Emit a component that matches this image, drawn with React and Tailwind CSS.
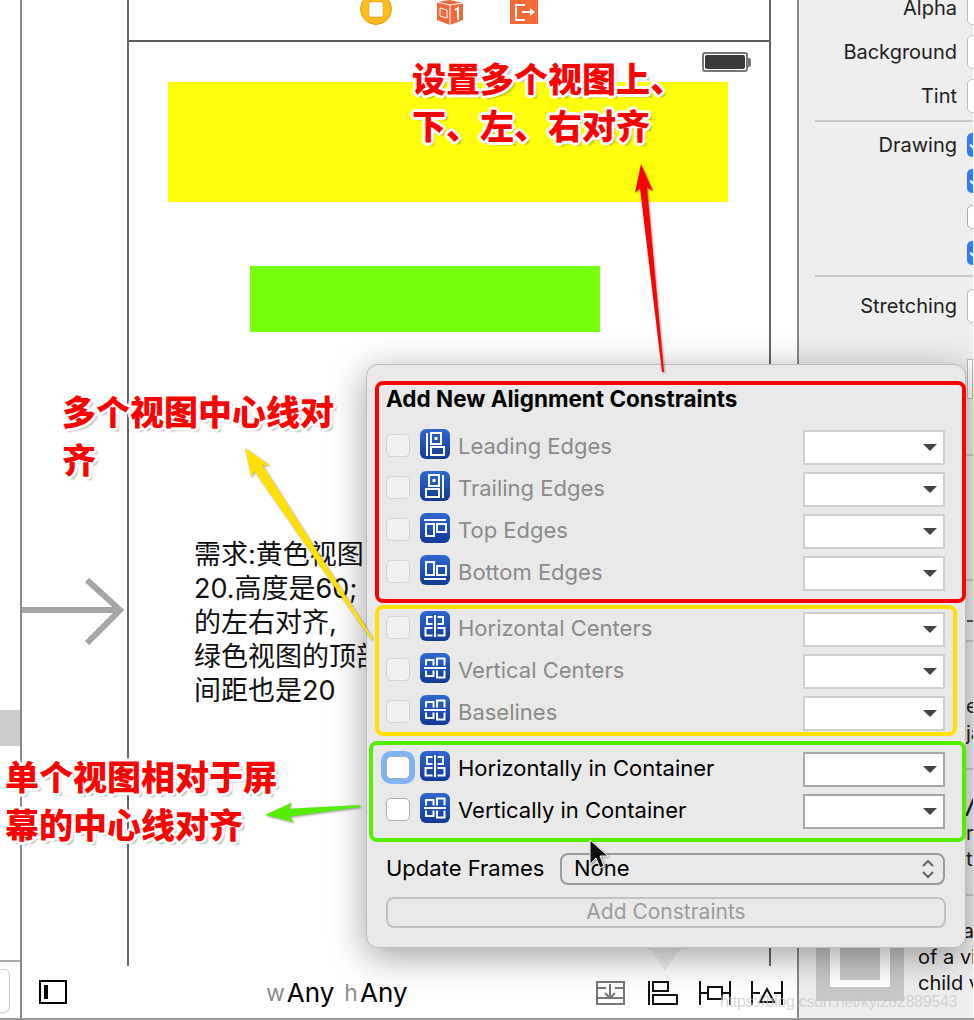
const uiFont = { fontFamily: '"Inter", "Liberation Sans", sans-serif' };

function AlignIcon({ kind }) {
  const common = { fill: "none", stroke: "white", strokeWidth: 2 };
  return (
    <div className="h-[30px] w-[30px] shrink-0 rounded-[6px] bg-linear-to-b from-[#2f68d0] to-[#143a94] -mt-[6px]">
      <svg width="30" height="30" viewBox="0 0 30 30" {...common}>
        {kind === "leading" && (
          <>
            <path d="M7 4v23" />
            <rect x="11" y="4" width="10" height="11" />
            <rect x="11" y="18" width="13" height="8" />
            <rect x="14.5" y="8" width="3" height="3" fill="white" stroke="none" />
          </>
        )}
        {kind === "trailing" && (
          <>
            <path d="M23 4v23" />
            <rect x="9" y="4" width="10" height="11" />
            <rect x="6" y="18" width="13" height="8" />
            <rect x="12.5" y="8" width="3" height="3" fill="white" stroke="none" />
          </>
        )}
        {kind === "top" && (
          <>
            <path d="M4 7h22" />
            <rect x="6" y="11" width="8" height="12" />
            <rect x="17" y="11" width="9" height="8" />
          </>
        )}
        {kind === "bottom" && (
          <>
            <path d="M4 24h22" />
            <rect x="6" y="7" width="8" height="13" />
            <rect x="17" y="11" width="9" height="9" />
          </>
        )}
        {kind === "hcenter" && (
          <>
            <rect x="7" y="6" width="16" height="7" />
            <rect x="5.5" y="17" width="19" height="7.5" />
            <path d="M15 3v24" stroke="#1f4fb0" strokeWidth="5" />
            <path d="M15 4v22" />
          </>
        )}
        {kind === "vcenter" && (
          <>
            <rect x="6" y="7" width="7.5" height="16" />
            <rect x="17" y="5.5" width="7.5" height="19" />
            <path d="M3 15h24" stroke="#1f4fb0" strokeWidth="5" />
            <path d="M4 15h22" />
          </>
        )}
      </svg>
    </div>
  );
}

function Dropdown({ active }) {
  return (
    <div className={`ml-auto flex h-[35px] w-[142px] items-center justify-end border-2 bg-white pr-[6px] ${active ? "border-[#a8a8a8]" : "border-[#cfcfcf]"}`}>
      <div className="h-0 w-0 border-x-[7px] border-t-[7px] border-x-transparent border-t-[#444]"></div>
    </div>
  );
}

function Row({ label, kind, active, focused }) {
  return (
    <div className="flex h-[42px] items-center">
      <div className={`h-[23px] w-[24px] shrink-0 rounded-[5px] border -mt-[3px] ${active ? "border-[#ababab] bg-white" : "border-[#d3d3d3] bg-[#f1f1f1]"} ${focused ? "shadow-[0_0_0_5px_#7fb3f2] border-[#7fb3f2]" : ""}`}></div>
      <div className="ml-[10px]">
        <AlignIcon kind={kind} />
      </div>
      <span className={`ml-[8px] -mt-[2px] text-[22px] leading-none ${active ? "text-black" : "text-[#8b8b8b]"}`}>{label}</span>
      <Dropdown active={active} />
    </div>
  );
}

function BlueCheck() {
  return (
    <div className="flex h-[24px] w-[24px] items-center rounded-[5px] bg-[#2f7df6] pl-[1px]">
      <span className="text-[14px] font-bold leading-none text-white">✓</span>
    </div>
  );
}

function InspectorRow({ label, children, height }) {
  return (
    <div className={`flex items-center ${height}`}>
      <span className="w-[158px] shrink-0 text-right text-[20px] leading-none text-[#222]">{label}</span>
      <div className="ml-[10px] shrink-0">{children}</div>
    </div>
  );
}

function Field() {
  return <div className="h-[34px] w-[30px] rounded-[5px] border border-[#bbb] bg-white"></div>;
}

function Inspector() {
  return (
    <div className="h-full w-[176px] shrink-0 overflow-hidden border-l-2 border-[#8a8a8a] bg-[#eeeeee] -ml-[1px]" style={uiFont}>
      <div className="-mt-[14px]">
        <InspectorRow label="Alpha" height="h-[44px]"><Field /></InspectorRow>
        <InspectorRow label="Background" height="h-[44px]"><Field /></InspectorRow>
        <InspectorRow label="Tint" height="h-[44px]"><Field /></InspectorRow>
      </div>
      <div className="ml-[16px] mt-[2px] h-[2px] bg-[#c8c8c8]"></div>
      <div className="mt-[5px]">
        <InspectorRow label="Drawing" height="h-[36px]"><BlueCheck /></InspectorRow>
        <InspectorRow height="h-[36px]"><BlueCheck /></InspectorRow>
        <InspectorRow height="h-[36px]"><div className="h-[24px] w-[24px] rounded-[5px] border border-[#aaa] bg-white"></div></InspectorRow>
        <InspectorRow height="h-[36px]"><BlueCheck /></InspectorRow>
      </div>
      <div className="ml-[16px] mt-[4px] h-[2px] bg-[#c8c8c8]"></div>
      <InspectorRow label="Stretching" height="h-[58px]"><Field /></InspectorRow>
      <div className="ml-[168px] mt-[24px] h-[40px] border border-[#bbb] bg-white"></div>

      <div className="mt-[55px] h-[2px] bg-[#c8c8c8]"></div>
      <div className="mt-[123px] h-[2px] bg-[#c8c8c8]"></div>
      <div className="ml-[168px] mt-[39px] h-[2px] bg-[#555]"></div>
      <div className="mt-[18px] h-[2px] bg-[#c8c8c8]"></div>
      <div className="ml-[167px] mt-[51px] flex flex-col text-[20px] leading-[27px] text-[#222]">
        <span>en</span>
        <span>ja</span>
      </div>
      <div className="mt-[21px] h-[2px] bg-[#c8c8c8]"></div>
      <div className="ml-[167px] mt-[24px] flex flex-col text-[20px] leading-[26px] text-[#222]">
        <span className="font-bold italic">/</span>
        <span>r</span>
        <span>ts</span>
      </div>
      <div className="mt-[22px] h-[2px] bg-[#c8c8c8]"></div>

      <div className="mt-[17px] flex">
        <div className="ml-[17px] flex h-[88px] w-[88px] shrink-0 items-center justify-center bg-[#c8c8c8]">
          <div className="flex h-[60px] w-[60px] items-center justify-center bg-white">
            <div className="h-[46px] w-[40px] bg-[#c8c8c8]"></div>
          </div>
        </div>
        <div className="ml-[14px] w-[56px] shrink-0 overflow-hidden pt-[5px] text-[20px] leading-[26px] text-[#111]">
          <div className="text-right">ta</div>
          <div className="whitespace-nowrap">of a view</div>
          <div className="whitespace-nowrap">child view</div>
        </div>
      </div>
    </div>
  );
}

function PhoneCanvas() {
  return (
    <div className="flex h-full w-[644px] shrink-0 flex-col" style={uiFont}>
      <div className="flex min-h-0 flex-1 flex-col border-x-2 border-[#666]">
        <div className="flex h-[42px] shrink-0 items-start border-b-2 border-[#5c5c5c] pl-[231px]">
          <svg width="32" height="26" viewBox="0 0 32 26" className="-mt-[1px]">
            <ellipse cx="16" cy="10" rx="15.5" ry="15.5" fill="#fdbb1c" stroke="#e79a12" />
            <rect x="9" y="3" width="14" height="15" fill="white" stroke="#e79a12" strokeDasharray="1.5 1" />
          </svg>
          <svg width="28" height="26" viewBox="0 0 28 26" className="ml-[44px]">
            <path d="M1 2 14 0l13 3v17L14 25 1 20z" fill="#ef6a3a" />
            <path d="M14 5v20M1 2l13 3 13-2M4 8l7 2v8l-7-2z" fill="none" stroke="white" strokeWidth="1" />
            <path d="M19 10l3-2v12" fill="none" stroke="white" strokeWidth="2" />
          </svg>
          <svg width="28" height="24" viewBox="0 0 28 24" className="ml-[46px]">
            <rect width="28" height="24" fill="#f66a33" />
            <path d="M15 5H6v15h9" fill="none" stroke="white" strokeWidth="2" />
            <path d="M12 11h8V8l5 4-5 4v-3h-8z" fill="white" />
          </svg>
        </div>
        <div className="flex justify-end pr-[17px] pt-[10px]">
          <div className="flex h-[20px] w-[50px] items-center">
            <div className="flex h-[20px] w-[46px] items-center rounded-[3px] border-2 border-[#777] p-[1px]">
              <div className="h-full w-full rounded-[2px] bg-[#3a3a3a]"></div>
            </div>
            <div className="h-[9px] w-[3px] rounded-r-[2px] bg-[#777]"></div>
          </div>
        </div>
        <div className="ml-[39px] mt-[10px] h-[120px] w-[560px] bg-[#ffff0b]"></div>
        <div className="ml-[121px] mt-[64px] h-[66px] w-[350px] bg-[#76ff0a]"></div>
        <div
          className="ml-[65px] mt-[206px] whitespace-nowrap text-[27px] leading-[34px] text-[#111]"
          style={{ fontFamily: '"Inter", "Noto Sans CJK SC", sans-serif' }}
        >
          <div>需求:黄色视图</div>
          <div>20.高度是60;</div>
          <div>的左右对齐,</div>
          <div>绿色视图的顶部</div>
          <div>间距也是20</div>
        </div>
      </div>
      <div className="flex h-[52px] shrink-0 items-center pl-[139px] pt-[2px]">
        <span className="text-[23px] leading-none text-[#8c8c8c]">w</span>
        <span className="ml-[2px] text-[26px] leading-none text-black">Any</span>
        <span className="ml-[10px] text-[23px] leading-none text-[#8c8c8c]">h</span>
        <span className="ml-[2px] text-[26px] leading-none text-black">Any</span>
        <svg width="190" height="26" viewBox="0 0 190 26" fill="none" className="ml-[188px] shrink-0">
          <g stroke="#777" strokeWidth="2">
            <rect x="1" y="2" width="27" height="22" />
            <path d="M1 8h9M19 8h9M1 18h27M14 4v14M9 13l5 5 5-5" />
          </g>
          <g stroke="#111" strokeWidth="2">
            <path d="M53 1v24" />
            <rect x="57" y="2" width="15" height="9" />
            <rect x="57" y="15" width="24" height="9" />
          </g>
          <g stroke="#111" strokeWidth="2">
            <path d="M104 1v24M134 1v24M104 13h8M126 13h8" />
            <rect x="112" y="7" width="14" height="12" />
          </g>
          <g stroke="#111" strokeWidth="2">
            <path d="M156 1v24M186 1v24M156 13h8M178 13h8M164 22h14M171 9l7 13h-14z" />
          </g>
        </svg>
      </div>
    </div>
  );
}

function Popover() {
  return (
    <div className="absolute left-[366px] top-[364px] h-[584px] w-[600px] rounded-[12px] border border-[#bdbdbd] bg-[#e9e9e9] pl-[19px] pr-[20px] shadow-[0_8px_36px_rgba(0,0,0,0.38)]" style={uiFont}>
      <div className="flex h-[61px] items-center pt-[7px] text-[22.5px] font-bold leading-none text-black">Add New Alignment Constraints</div>
      <Row label="Leading Edges" kind="leading" />
      <Row label="Trailing Edges" kind="trailing" />
      <Row label="Top Edges" kind="top" />
      <Row label="Bottom Edges" kind="bottom" />
      <div className="h-[14px]"></div>
      <Row label="Horizontal Centers" kind="hcenter" />
      <Row label="Vertical Centers" kind="vcenter" />
      <Row label="Baselines" kind="vcenter" />
      <div className="h-[14px]"></div>
      <Row label="Horizontally in Container" kind="hcenter" active focused />
      <Row label="Vertically in Container" kind="vcenter" active />
      <div className="mt-[21px] flex items-center">
        <span className="w-[174px] shrink-0 -mt-[2px] whitespace-nowrap text-[22px] leading-none text-black">Update Frames</span>
        <div className="flex h-[32px] w-[386px] items-center justify-between rounded-[8px] border-2 border-[#9c9c9c] pl-[12px] pr-[8px]">
          <span className="-mt-[2px] text-[22px] leading-none text-black">None</span>
          <svg width="14" height="22" viewBox="0 0 14 22" fill="none" stroke="#666" strokeWidth="2">
            <path d="M2 8l5-5 5 5M2 14l5 5 5-5" />
          </svg>
        </div>
      </div>
      <div className="mt-[12px] flex h-[31px] w-[560px] items-center justify-center rounded-[8px] border-2 border-[#c2c2c2] pb-[2px] text-[21px] leading-none text-[#9c9c9c]">
        Add Constraints
      </div>
    </div>
  );
}

function Note({ className, lines }) {
  return (
    <div
      className={`absolute whitespace-nowrap text-[34px] font-black text-[#ff0000] [text-shadow:3px_0_0_white,-3px_0_0_white,0_3px_0_white,0_-3px_0_white,2px_2px_0_white,-2px_2px_0_white,2px_-2px_0_white,-2px_-2px_0_white,3px_3px_2px_rgba(0,0,0,0.35)] ${className}`}
      style={{ fontFamily: '"Noto Sans CJK SC", sans-serif' }}
    >
      {lines.map((l) => (
        <div key={l}>{l}</div>
      ))}
    </div>
  );
}

function Arrow({ x1, y1, x2, y2, color, shaft, head }) {
  const a = Math.atan2(y2 - y1, x2 - x1);
  const p = (d, s) => `${x2 - d * Math.cos(a) - s * Math.sin(a)},${y2 - d * Math.sin(a) + s * Math.cos(a)}`;
  const len = Math.hypot(x2 - x1, y2 - y1);
  const points = [p(len, 1), p(24, shaft), p(28, head), `${x2},${y2}`, p(28, -head), p(24, -shaft), p(len, -1)].join(" ");
  return <polygon points={points} fill={color} />;
}

export default function App() {
  return (
    <div className="relative h-[1020px] w-[974px] overflow-hidden bg-white">
      <div className="flex h-[1020px] border-b-2 border-[#999]">
        <div className="flex h-full w-[20px] shrink-0 flex-col">
          <div className="mt-[710px] h-[36px] bg-[#cccccc]"></div>
          <div className="mt-auto h-[58px] border-t-2 border-[#aaa] pt-[7px]">
            <div className="h-[44px] w-[10px] rounded-r-[6px] border border-l-0 border-[#ccc] bg-white"></div>
          </div>
        </div>
        <div className="flex h-full w-[107px] shrink-0 flex-col border-l-2 border-[#8a8a8a]">
          <svg width="105" height="70" viewBox="0 0 105 70" fill="none" stroke="#a5a5a5" strokeWidth="6" className="mt-[575px]">
            <path d="M0 35h98M65 5l33 30-33 33" />
          </svg>
          <div className="ml-[17px] mt-auto mb-[14px] h-[24px] w-[28px] border-2 border-black pl-[3px] pt-[3px]">
            <div className="h-[14px] w-[4px] bg-black"></div>
          </div>
        </div>
        <PhoneCanvas />
        <div className="h-full w-[27px] shrink-0"></div>
        <Inspector />
      </div>

      <svg width="974" height="1020" viewBox="0 0 974 1020" className="pointer-events-none absolute left-0 top-0">
        <path d="M636 947h6q8 0 14 10l9 14 9-14q6-10 14-10h6z" fill="#f0f0f0" />
      </svg>
      <Popover />

      <div className="absolute left-[375px] top-[381px] h-[222px] w-[591px] rounded-[8px] border-[4px] border-[#ff0000]"></div>
      <div className="absolute left-[375px] top-[605px] h-[131px] w-[582px] rounded-[8px] border-[4px] border-[#ffe000]"></div>
      <div className="absolute left-[369px] top-[741px] h-[101px] w-[597px] rounded-[8px] border-[4px] border-[#55ee00]"></div>

      <Note className="left-[412px] top-[54px] leading-[47px]" lines={["设置多个视图上、", "下、左、右对齐"]} />
      <Note className="left-[62px] top-[387px] leading-[48px]" lines={["多个视图中心线对", "齐"]} />
      <Note className="left-[5px] top-[752px] leading-[48px]" lines={["单个视图相对于屏", "幕的中心线对齐"]} />

      <svg width="974" height="1020" viewBox="0 0 974 1020" className="pointer-events-none absolute left-0 top-0 [filter:drop-shadow(1px_1px_1px_rgba(0,0,0,0.4))]">
        <Arrow x1={663} y1={372} x2={641} y2={164} color="#ff0000" shaft={3.5} head={9} />
        <Arrow x1={372} y1={639} x2={245} y2={448} color="#ffe000" shaft={5} head={11} />
        <Arrow x1={360} y1={806} x2={265} y2={815} color="#55ee00" shaft={4} head={10} />
        <path d="M590 840v24l6-6 4 10 4-2-4-10h8z" fill="#111" stroke="white" strokeWidth="1" />
      </svg>

      <div className="absolute left-[720px] top-[994px] whitespace-nowrap text-[16px] leading-none tracking-[-0.3px] text-[#c4c4c4]/70" style={{ fontFamily: '"Liberation Sans", sans-serif' }}>
        https://blog.csdn.net/kyl282889543
      </div>
    </div>
  );
}
